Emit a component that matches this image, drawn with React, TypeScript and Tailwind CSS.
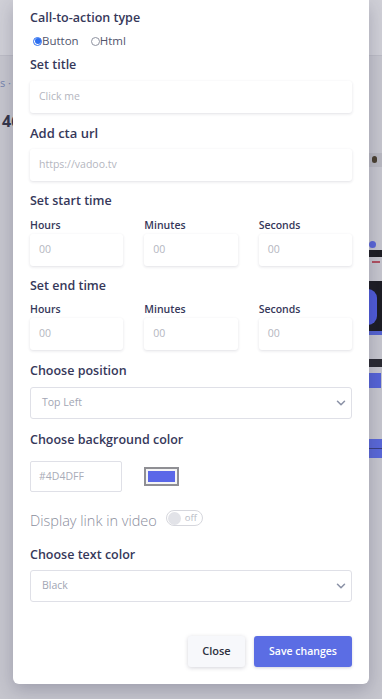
import { ChevronDown } from "lucide-react";

const font = { fontFamily: '"Open Sans", "Noto Sans", Arial, sans-serif' };

function Label({ children, className = "" }: { children: React.ReactNode; className?: string }) {
  return (
    <div className={`h-[18px] text-[12.5px] font-semibold leading-[18px] text-[#36385a] ${className}`}>
      {children}
    </div>
  );
}

function TextBox({ placeholder, className = "" }: { placeholder: string; className?: string }) {
  return (
    <div
      className={`flex h-[32px] items-center rounded-[3px] bg-white pl-[9px] text-[10.5px] text-[#b4b6c0] shadow-[0_1px_3px_rgba(40,40,70,0.14)] ${className}`}
    >
      {placeholder}
    </div>
  );
}

function TimeRow({ className = "" }: { className?: string }) {
  return (
    <div className={`grid grid-cols-3 gap-x-[21px] ${className}`}>
      {["Hours", "Minutes", "Seconds"].map((l) => (
        <div key={l}>
          <div className="h-[16px] text-[10.5px] font-semibold leading-[16px] text-[#36385a]">{l}</div>
          <TextBox placeholder="00" className="mt-[1px] pl-[8px]" />
        </div>
      ))}
    </div>
  );
}

function Select({ value, className = "" }: { value: string; className?: string }) {
  return (
    <div
      className={`flex h-[32px] items-center justify-between rounded-[3px] border border-[#dfe0e7] bg-white pl-[11px] pr-[3px] text-[10.5px] text-[#a2a6b4] ${className}`}
    >
      <span>{value}</span>
      <ChevronDown size={14} strokeWidth={2.6} className="text-[#8b92a6]" />
    </div>
  );
}

export default function App() {
  return (
    <div style={font} className="relative h-[699px] w-[382px] overflow-hidden bg-[#c6c6ce]">
      {/* dimmed page behind the modal */}
      <div aria-hidden className="absolute inset-0">
        <div className="absolute left-0 top-0 h-[56px] w-full border-b border-[#bdbdc6] bg-[#d0d0d7]" />
        <div className="absolute left-0 top-[75px] text-[11px] text-[#7584ad]">s ·</div>
        <div className="absolute left-[2px] top-[109px] text-[16px] font-bold text-[#34364a]">46</div>
        <div className="absolute right-0 top-[153px] h-[14px] w-[14px] bg-[#b9b9c1]">
          <div className="ml-[4px] mt-[3px] h-[7px] w-[5px] rounded-sm bg-[#4a4030]" />
        </div>
        <div className="absolute left-[369px] top-[241px] h-[7px] w-[7px] rounded-full bg-[#5a66d8]" />
        <div className="absolute left-[369px] top-[250px] h-[7px] w-[13px] bg-[#1e1e24]" />
        <div className="absolute left-[372px] top-[261px] h-[2px] w-[8px] bg-[#b05060]" />
        <div className="absolute left-[369px] top-[281px] h-[50px] w-[13px] bg-[#1d1d24]">
          <div className="-ml-[10px] mt-[8px] h-[36px] w-[18px] rounded-full bg-[#4f5bd8]" />
        </div>
        <div className="absolute left-[369px] top-[331px] h-[4px] w-[13px] bg-[#5563d0]" />
        <div className="absolute left-[369px] top-[359px] h-[8px] w-[13px] bg-[#2a2a32]" />
        <div className="absolute left-[369px] top-[373px] h-[15px] w-[12px] bg-[#5563d6]" />
        <div className="absolute left-[369px] top-[439px] h-[19px] w-[13px] bg-[#5a68d8]">
          <div className="mt-[9px] h-px w-full bg-[#3a3f80]" />
        </div>
      </div>

      <div className="relative ml-[13px] w-[356px] rounded-b-[6px] bg-white px-[17px] pb-[17px] pt-[9px] shadow-[0_6px_18px_rgba(40,40,70,0.25)]">
        <Label>Call-to-action type</Label>
        <div className="mt-[6px] flex h-[16px] items-center text-[11.5px] text-[#50546c]">
          <span className="ml-[3px] flex h-[9px] w-[9px] items-center justify-center rounded-full border border-[#2d6ff0]">
            <span className="h-[6px] w-[6px] rounded-full bg-[#2d6ff0]" />
          </span>
          <span>Button</span>
          <span className="ml-[12px] h-[9px] w-[9px] rounded-full border border-[#8e92a0]" />
          <span>Html</span>
        </div>

        <Label className="mt-[7px]">Set title</Label>
        <TextBox placeholder="Click me" className="mt-[7px]" />

        <Label className="mt-[11px] text-[13px] font-medium">Add cta url</Label>
        <TextBox placeholder="https://vadoo.tv" className="mt-[7px]" />

        <Label className="mt-[11px]">Set start time</Label>
        <TimeRow className="mt-[7px]" />

        <Label className="mt-[11px]">Set end time</Label>
        <TimeRow className="mt-[6px]" />

        <Label className="mt-[12px]">Choose position</Label>
        <Select value="Top Left" className="mt-[7px]" />

        <Label className="mt-[12px]">Choose background color</Label>
        <div className="mt-[12px] flex items-center gap-[22px]">
          <div className="flex h-[31px] w-[92px] items-center rounded-[2px] border border-[#dfe0e7] pl-[8px] text-[10.5px] text-[#a9acb8]">
            #4D4DFF
          </div>
          <div className="flex h-[19px] w-[35px] items-center justify-center border-2 border-[#8f8f94] bg-[#f4f4f4] p-[2px]">
            <div className="h-full w-full bg-[#5a67e8]" />
          </div>
        </div>

        <div className="mt-[19px] flex h-[20px] items-center">
          <span className="text-[14.5px] font-light text-[#8a8d9c]">Display link in video</span>
          <span className="ml-[9px] -mt-[6px] flex h-[16px] w-[37px] items-center rounded-full border border-[#d6d7dd] bg-white pl-[1px]">
            <span className="h-[13px] w-[13px] rounded-full bg-[#e2e3e8]" />
            <span className="ml-[4px] text-[9.5px] text-[#b9bcc6]">off</span>
          </span>
        </div>

        <Label className="mt-[15px]">Choose text color</Label>
        <Select value="Black" className="mt-[6px]" />

        <div className="mt-[34px] flex justify-end gap-[9px]">
          <button className="h-[31px] w-[57px] rounded-[3px] bg-[#f7f8fb] text-[11px] font-semibold text-[#2e3040] shadow-[0_1px_4px_rgba(40,40,70,0.2)]">
            Close
          </button>
          <button className="h-[31px] w-[98px] rounded-[3px] bg-[#5b6de4] text-[10.5px] font-semibold text-white shadow-[0_1px_3px_rgba(40,40,90,0.2)]">
            Save changes
          </button>
        </div>
      </div>
    </div>
  );
}
